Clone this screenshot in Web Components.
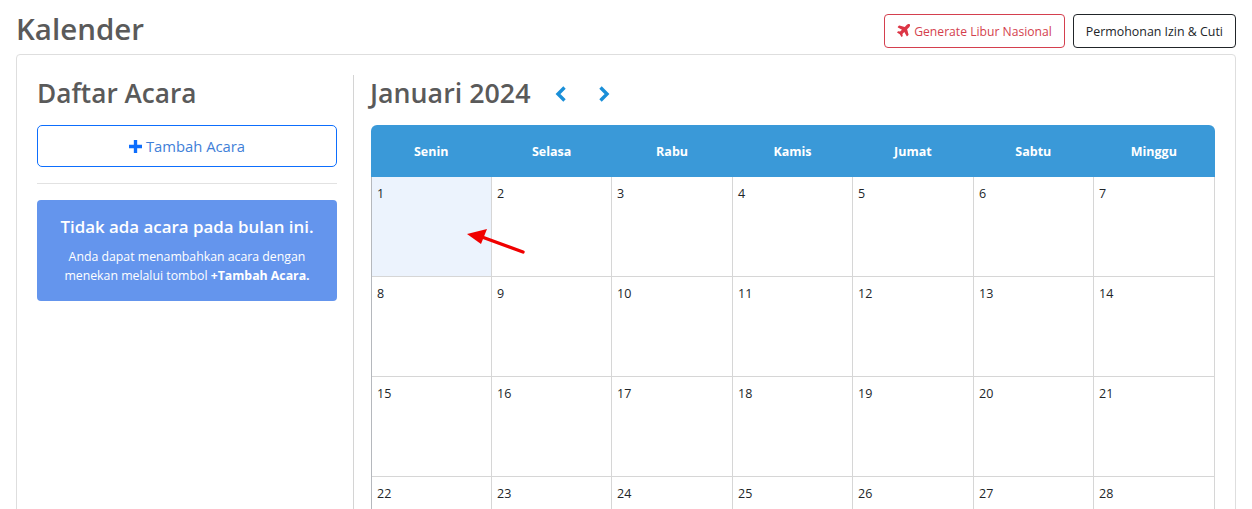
<!DOCTYPE html>
<html lang="id">
<head>
<meta charset="utf-8">
<title>Kalender</title>
<style>
    html, body { margin: 0; height: 509px; overflow: hidden; background: #fff; }
    body { font-family: "Open Sans", "Noto Sans", sans-serif; color: #212529; }
</style>
</head>
<body>
<kalender-page>
    <outline-button slot="actions" tone="danger">
        <svg slot="icon" width="15" height="15" viewBox="0 0 576 512" style="transform: rotate(-45deg)"><path fill="#dc3545" d="M480 192H365.71L260.61 8.06A16.014 16.014 0 0 0 246.71 0h-65.5c-10.63 0-18.3 10.17-15.38 20.39L214.86 192H112l-43.2-57.6c-3.02-4.03-7.77-6.4-12.8-6.4H16.01C5.6 128-2.04 137.78.49 147.88L32 256 .49 364.12C-2.04 374.22 5.6 384 16.01 384H56c5.04 0 9.78-2.37 12.8-6.4L112 320h102.86l-49.03 171.6c-2.92 10.22 4.75 20.4 15.38 20.4h65.5c5.74 0 11.04-3.08 13.89-8.06L365.71 320H480c35.35 0 96-28.65 96-64s-60.65-64-96-64z"/></svg>
        Generate Libur Nasional
    </outline-button>
    <outline-button slot="actions" tone="dark">Permohonan Izin &amp; Cuti</outline-button>
    <event-sidebar slot="sidebar"></event-sidebar>
    <month-calendar slot="main" month="Januari 2024"></month-calendar>
</kalender-page>

<script>
class KalenderPage extends HTMLElement {
    constructor() {
        super();
        this.attachShadow({ mode: "open" });
        this.shadowRoot.innerHTML = `
            <style>
                :host { display: block; padding: 0 16px; }
                .top {
                    display: flex;
                    justify-content: space-between;
                    align-items: flex-start;
                    height: 54px;
                    padding-top: 14px;
                    box-sizing: border-box;
                }
                h1 {
                    margin: -3px 0 0;
                    font-size: 29.5px;
                    font-weight: 600;
                    line-height: 36px;
                    color: #5a5a5a;
                }
                .actions { display: flex; gap: 8px; }
                .card {
                    display: flex;
                    border: 1px solid #dedede;
                    border-radius: 4px;
                    padding: 20px 20px 0;
                    height: 600px;
                    box-sizing: border-box;
                }
                .side {
                    width: 317px;
                    flex: none;
                    box-sizing: border-box;
                    padding-right: 16px;
                    border-right: 1px solid #d4d4d4;
                }
                .main { flex: 1; min-width: 0; padding-left: 16px; }
            </style>
            <div class="top">
                <h1>Kalender</h1>
                <div class="actions"><slot name="actions"></slot></div>
            </div>
            <div class="card">
                <div class="side"><slot name="sidebar"></slot></div>
                <div class="main"><slot name="main"></slot></div>
            </div>
        `;
    }
}

class OutlineButton extends HTMLElement {
    constructor() {
        super();
        this.attachShadow({ mode: "open" });
        this.shadowRoot.innerHTML = `
            <style>
                :host {
                    display: inline-flex;
                    align-items: center;
                    justify-content: center;
                    gap: 2px;
                    box-sizing: border-box;
                    height: 34px;
                    padding: 0 12px;
                    border: 1px solid currentColor;
                    border-radius: 4px;
                    font-size: 12.4px;
                    white-space: nowrap;
                }
                :host([tone="danger"]) { color: #d43f4e; font-size: 12.15px; }
                :host([tone="dark"]) { color: #212529; }
                ::slotted(svg) { flex: none; position: relative; top: -2px; }
            </style>
            <slot name="icon"></slot><slot></slot>
        `;
    }
}

class EventSidebar extends HTMLElement {
    constructor() {
        super();
        this.attachShadow({ mode: "open" });
        this.shadowRoot.innerHTML = `
            <style>
                :host { display: block; }
                h2 {
                    margin: 0;
                    height: 50px;
                    font-size: 26.2px;
                    font-weight: 600;
                    line-height: 36px;
                    color: #5a5a5a;
                }
                .add {
                    display: flex;
                    align-items: center;
                    justify-content: center;
                    gap: 4px;
                    height: 42px;
                    box-sizing: border-box;
                    border: 1px solid #0d6efd;
                    border-radius: 5px;
                    color: #3f7fd8;
                    font-size: 14.8px;
                }
                hr {
                    border: 0;
                    border-top: 1px solid #e2e2e2;
                    margin: 16px 0;
                }
                .empty {
                    height: 101px;
                    box-sizing: border-box;
                    padding-top: 14px;
                    background: #6495ed;
                    border-radius: 4px;
                    color: #fff;
                    text-align: center;
                }
                .empty h3 {
                    margin: 0 0 8px;
                    font-size: 16.9px;
                    font-weight: 600;
                    line-height: 25px;
                }
                .empty p {
                    margin: 0;
                    font-size: 12.3px;
                    line-height: 19px;
                }
                .empty b { font-weight: 700; }
            </style>
            <h2>Daftar Acara</h2>
            <div class="add">
                <svg width="13" height="13" viewBox="0 0 14 14"><path fill="#0d6efd" d="M5.2 0h3.6v5.2H14v3.6H8.8V14H5.2V8.8H0V5.2h5.2z"/></svg>
                Tambah Acara
            </div>
            <hr>
            <div class="empty">
                <h3>Tidak ada acara pada bulan ini.</h3>
                <p>Anda dapat menambahkan acara dengan<br>menekan melalui tombol <b>+Tambah Acara.</b></p>
            </div>
        `;
    }
}

class MonthCalendar extends HTMLElement {
    constructor() {
        super();
        this.attachShadow({ mode: "open" });
        const days = ["Senin", "Selasa", "Rabu", "Kamis", "Jumat", "Sabtu", "Minggu"];
        const head = days.map((d) => `<div>${d}</div>`).join("");
        let cells = "";
        for (let i = 1; i <= 28; i++) {
            cells += `<div class="day${i === 1 ? " today" : ""}">${i}</div>`;
        }
        this.shadowRoot.innerHTML = `
            <style>
                :host { display: block; position: relative; }
                .bar {
                    display: flex;
                    align-items: center;
                    height: 38px;
                    margin-bottom: 12px;
                }
                h2 {
                    margin: 0 16px 0 0;
                    font-size: 26.8px;
                    font-weight: 600;
                    line-height: 38px;
                    position: relative;
                    top: -1px;
                    color: #5a5a5a;
                }
                .nav { display: flex; gap: 29px; margin-left: 8px; }
                .nav svg { display: block; }
                .grid { margin-left: 1px; width: 844px; }
                .head {
                    display: grid;
                    grid-template-columns: repeat(7, 1fr);
                    box-sizing: border-box;
                    padding-right: 1px;
                    height: 52px;
                    background: #3a99d8;
                    border-radius: 6px 6px 0 0;
                    color: #fff;
                    font-size: 12.5px;
                    font-weight: 700;
                    line-height: 54px;
                    text-align: center;
                }
                .days {
                    display: grid;
                    grid-template-columns: 120px 120px 121px 120px 121px 120px 121px;
                    grid-auto-rows: 100px;
                    border-left: 1px solid #b5b8bd;
                }
                .day {
                    box-sizing: border-box;
                    padding: 8px 5px;
                    border-right: 1px solid #d6d6d6;
                    border-bottom: 1px solid #d6d6d6;
                    font-size: 12.5px;
                    line-height: 18px;
                }
                .today { background: #ecf3fd; }
                .arrow { position: absolute; left: 95px; top: 154px; }
            </style>
            <div class="bar">
                <h2>${this.getAttribute("month")}</h2>
                <div class="nav">
                    <svg width="14" height="18" viewBox="0 0 14 18"><path d="M10.5 2.5 4 9l6.5 6.5" fill="none" stroke="#1a8fd8" stroke-width="3.4"/></svg>
                    <svg width="14" height="18" viewBox="0 0 14 18"><path d="M3.5 2.5 10 9l-6.5 6.5" fill="none" stroke="#1a8fd8" stroke-width="3.4"/></svg>
                </div>
            </div>
            <div class="grid">
                <div class="head">${head}</div>
                <div class="days">${cells}</div>
            </div>
            <svg class="arrow" width="62" height="30" viewBox="0 0 62 30">
                <path d="M58 23 17 8" stroke="#f00000" stroke-width="3.4" stroke-linecap="round" fill="none"/>
                <path d="M2 5 22 0 16 15z" fill="#f00000"/>
            </svg>
        `;
    }
}

customElements.define("kalender-page", KalenderPage);
customElements.define("outline-button", OutlineButton);
customElements.define("event-sidebar", EventSidebar);
customElements.define("month-calendar", MonthCalendar);
</script>
</body>
</html>
